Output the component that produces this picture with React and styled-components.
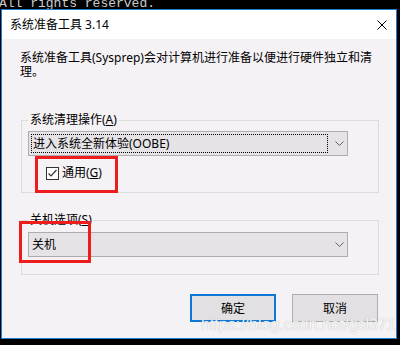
import React from "react";
import styled, { createGlobalStyle } from "styled-components";

const GlobalStyle = createGlobalStyle`
  html, body {
    margin: 0;
    padding: 0;
    background: #000000;
    width: 400px;
    height: 345px;
    overflow: hidden;
  }
`;

const Screen = styled.div`
  position: relative;
  width: 400px;
  height: 345px;
  font-family: "Noto Sans", "Noto Sans CJK SC", sans-serif;
  font-size: 12px;
  color: #000000;
`;

const Console = styled.div`
  height: 9px;
  overflow: hidden;
`;

const ConsoleLine = styled.div`
  margin: -3px 0 0 -1px;
  font-family: "Liberation Mono", monospace;
  font-size: 13px;
  line-height: 13px;
  color: #cccccc;
  white-space: pre;
`;

const Dialog = styled.div`
  position: relative;
  margin-left: 1px;
  width: 396px;
  height: 330px;
  box-sizing: border-box;
  border: 1px solid #1c7fd6;
  background: #f5f2f5;
  display: flex;
  flex-direction: column;
`;

const TitleBar = styled.div`
  height: 29px;
  flex-shrink: 0;
  background: #ffffff;
  display: flex;
  align-items: center;
  justify-content: space-between;
  padding: 0 9px 0 8px;
`;

const Title = styled.span`
  line-height: 14px;
`;

const Body = styled.div`
  flex: 1;
  padding: 12px 0 0 19px;
  display: flex;
  flex-direction: column;
`;

const Description = styled.p`
  margin: 0 0 0 -1px;
  width: 372px;
  line-height: 14px;
  white-space: nowrap;
`;

const Group = styled.fieldset`
  margin: ${(p) => p.$top}px 0 0 0;
  padding: ${(p) => p.$pt}px 0 ${(p) => p.$pb}px 6px;
  width: 358px;
  min-width: 0;
  box-sizing: border-box;
  border: 1px solid #dcdcdc;
`;

const Legend = styled.legend`
  padding: 0 2px;
  line-height: 14px;
`;

const Combo = styled.div`
  width: 320px;
  height: 25px;
  box-sizing: border-box;
  border: 1px solid #adadad;
  background: #e6e3e6;
  display: flex;
  align-items: center;
  justify-content: space-between;
  padding-right: 3px;
`;

const ComboValue = styled.div`
  margin-left: 2px;
  width: 297px;
  height: 19px;
  box-sizing: border-box;
  border: 1px dotted ${(p) => (p.$focused ? "#000000" : "transparent")};
  padding-left: ${(p) => (p.$focused ? 1 : 0)}px;
  display: flex;
  align-items: center;
  line-height: 14px;
`;

const CheckRow = styled.label`
  margin-top: 10px;
  padding-left: 18px;
  display: flex;
  align-items: center;
  gap: 3px;
  line-height: 14px;
`;

const CheckBox = styled.span`
  width: 13px;
  height: 13px;
  box-sizing: border-box;
  border: 1px solid #333333;
  background: #ffffff;
  display: flex;
`;

const Buttons = styled.div`
  margin-top: 19px;
  width: 357px;
  display: flex;
  justify-content: flex-end;
  gap: 16px;
`;

const Button = styled.button`
  width: 86px;
  height: 28px;
  box-sizing: border-box;
  margin: 0;
  padding: 0;
  border: ${(p) => (p.$default ? "2px solid #0f78d7" : "1px solid #adadad")};
  background: #e3e0e3;
  font-family: inherit;
  font-size: 12px;
  color: #000000;
`;

const Mark = styled.div`
  position: absolute;
  left: ${(p) => p.$x}px;
  top: ${(p) => p.$y}px;
  width: ${(p) => p.$w}px;
  height: ${(p) => p.$h}px;
  box-sizing: border-box;
  border: 3px solid #ee1d1d;
  pointer-events: none;
`;

const Watermark = styled.div`
  position: absolute;
  left: 201px;
  top: 316px;
  font-family: "Liberation Sans", Arial, sans-serif;
  font-size: 16px;
  line-height: 18px;
  color: rgba(255, 255, 255, 0.9);
  text-shadow: 0 0 1px rgba(120, 120, 120, 0.6);
  pointer-events: none;
`;

const CloseIcon = () => (
  <svg width="10" height="10" viewBox="0 0 10 10">
    <path d="M0.5 0.5 L9.5 9.5 M9.5 0.5 L0.5 9.5" stroke="#000" strokeWidth="1" />
  </svg>
);

const Chevron = () => (
  <svg width="9" height="5" viewBox="0 0 9 5">
    <path d="M0.5 0.5 L4.5 4.5 L8.5 0.5" fill="none" stroke="#606060" strokeWidth="1" />
  </svg>
);

const Tick = () => (
  <svg width="11" height="11" viewBox="0 0 11 11">
    <path d="M1.5 5.5 L4 8 L9.5 2" fill="none" stroke="#333" strokeWidth="1.2" />
  </svg>
);

export default function App() {
  return (
    <Screen>
      <GlobalStyle />
      <Console>
        <ConsoleLine>All rights reserved.</ConsoleLine>
      </Console>
      <Dialog>
        <TitleBar>
          <Title>系统准备工具 3.14</Title>
          <CloseIcon />
        </TitleBar>
        <Body>
          <Description>
            系统准备工具(Sysprep)会对计算机进行准备以便进行硬件独立和清
            <br />
            理。
          </Description>
          <Group $top={34} $pt={4} $pb={12}>
            <Legend>
              系统清理操作(<u>A</u>)
            </Legend>
            <Combo>
              <ComboValue $focused>进入系统全新体验(OOBE)</ComboValue>
              <Chevron />
            </Combo>
            <CheckRow>
              <CheckBox>
                <Tick />
              </CheckBox>
              <span>
                通用(<u>G</u>)
              </span>
            </CheckRow>
          </Group>
          <Group $top={20} $pt={5} $pb={17}>
            <Legend>
              关机选项(<u>S</u>)
            </Legend>
            <Combo>
              <ComboValue>关机</ComboValue>
              <Chevron />
            </Combo>
          </Group>
          <Buttons>
            <Button $default>确定</Button>
            <Button>取消</Button>
          </Buttons>
        </Body>
        <Mark $x={33} $y={146} $w={83} $h={37} />
        <Mark $x={17} $y={211} $w={72} $h={42} />
      </Dialog>
      <Watermark>https://blog.csdn.net/gsl371</Watermark>
    </Screen>
  );
}
